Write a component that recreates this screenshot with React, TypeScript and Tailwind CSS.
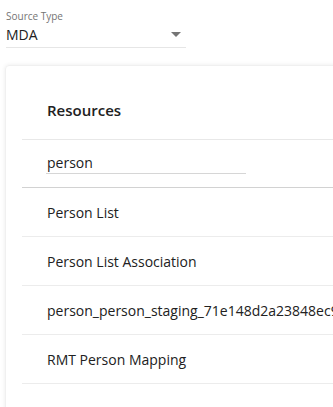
import React from 'react';

const resources = [
  'Person List',
  'Person List Association',
  'person_person_staging_71e148d2a23848ec9a1b',
  'RMT Person Mapping',
];

const App: React.FC = () => {
  return (
    <div className="w-[333px] h-[407px] overflow-hidden bg-white text-[#212121]" style={{ fontFamily: '"Open Sans", "Noto Sans", sans-serif' }}>
      {/* Source type select */}
      <div className="ml-[6px] w-[180px] pt-[9px]">
        <div className="text-[10px] leading-[14px] text-[#757575]">Source Type</div>
        <div className="flex items-center justify-between h-[25px] border-b border-[#e6e6e6]">
          <span className="text-[14px] leading-[20px]">MDA</span>
          <svg width="10" height="5" viewBox="0 0 10 5" className="mr-[5px] mb-[2px]">
            <path d="M0 0 L10 0 L5 5 Z" fill="#757575" />
          </svg>
        </div>
      </div>

      {/* Resources card */}
      <div className="mt-[17px] ml-[5px] w-[380px] rounded-[4px] border border-[#f0f0f0] shadow-[0_0_4px_rgba(0,0,0,0.08)] pl-[16px] pb-[30px]">
        <div className="h-[74px] flex items-end pb-[19px] pl-[25px] border-b border-[#e8e8e8]">
          <span className="text-[15px] font-semibold leading-[20px]">Resources</span>
        </div>
        <div className="h-[48px] pl-[24px] pt-[12px] border-b border-[#d2d2d2]">
          <div className="w-[200px] border-b border-[#d6d6d6] text-[14px] leading-[21px] pl-[1px]">person</div>
        </div>
        {resources.map((r) => (
          <div key={r} className="h-[49px] flex items-center pl-[25px] border-b border-[#ececec] whitespace-nowrap text-[14px]">
            {r}
          </div>
        ))}
      </div>
    </div>
  );
};

export default App;
